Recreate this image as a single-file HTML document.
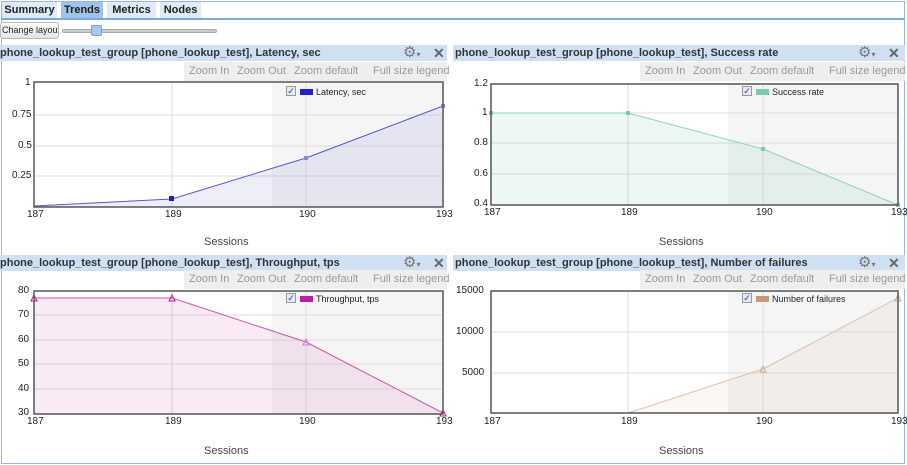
<!DOCTYPE html>
<html><head><meta charset="utf-8"><style>
*{margin:0;padding:0;box-sizing:border-box}
body{width:907px;height:465px;background:#fff;font-family:"Liberation Sans",sans-serif;position:relative;overflow:hidden}
.a{position:absolute}
.tab{position:absolute;top:2px;height:16px;background:#dfeaf7;font-weight:bold;font-size:11px;line-height:16px;text-align:center;color:#222}
.hdr{position:absolute;height:16px;background:#cfe0f3;font-weight:bold;font-size:11px;line-height:16px;color:#333;white-space:nowrap;overflow:hidden}
.tb{position:absolute;height:19px;background:#eeeeee;font-size:11px;line-height:19px;color:#999;white-space:nowrap}
.tb span{position:absolute}
.gear{position:absolute;font-size:15px;color:#777;line-height:16px}
.x{position:absolute;font-size:14px;color:#666;line-height:16px;font-weight:bold}
.lab{position:absolute;font-size:10px;color:#222;line-height:10px}
.ses{position:absolute;font-size:11px;color:#444}
.leg{position:absolute;font-size:9px;color:#222;line-height:12px;white-space:nowrap}
.cb{display:inline-block;width:10px;height:10px;border:1px solid #999;background:#e4e8f0;font-size:9px;line-height:9px;text-align:center;color:#2244aa;vertical-align:top;margin-right:4px}
.sw{display:inline-block;width:13px;height:6px;vertical-align:top;margin-top:3px;margin-right:3px}
</style></head><body>
<div class="a" style="left:1px;top:1px;width:904px;height:463px;border:1px solid #9ab6dc"></div>
<div class="a" style="left:1px;top:18px;width:904px;height:2px;background:#7fa6d9"></div>
<div class="tab" style="left:2px;width:55px">Summary</div>
<div class="tab" style="left:61px;width:42px;background:#9fc3ea">Trends</div>
<div class="tab" style="left:107px;width:49px">Metrics</div>
<div class="tab" style="left:160px;width:41px">Nodes</div>
<div class="a" style="left:0;top:22px;width:59px;height:17px;border:1px solid #bbb;border-radius:3px;background:linear-gradient(#fafafa,#e4e4e4);font-size:9px;line-height:15px;color:#222;padding-left:1px;white-space:nowrap;overflow:hidden">Change layout</div>
<div class="a" style="left:62px;top:29px;width:155px;height:4px;background:#ccc;border:1px solid #aaa;border-radius:2px"></div>
<div class="a" style="left:91px;top:25px;width:11px;height:11px;background:#a8c8f0;border:1px solid #7aa0d0;border-radius:2px"></div>

<div class="hdr" style="left:0;top:45px;width:447px">phone_lookup_test_group [phone_lookup_test], Latency, sec</div>
<div class="hdr" style="left:453px;top:45px;width:452px;padding-left:2px">phone_lookup_test_group [phone_lookup_test], Success rate</div>
<div class="hdr" style="left:0;top:255px;width:447px">phone_lookup_test_group [phone_lookup_test], Throughput, tps</div>
<div class="hdr" style="left:453px;top:255px;width:452px;padding-left:2px">phone_lookup_test_group [phone_lookup_test], Number of failures</div>
<div class="gear" style="left:403px;top:45px">⚙<span style="font-size:8px">▾</span></div><div class="x" style="left:433px;top:45px">✕</div>
<div class="gear" style="left:858px;top:45px">⚙<span style="font-size:8px">▾</span></div><div class="x" style="left:888px;top:45px">✕</div>
<div class="gear" style="left:403px;top:255px">⚙<span style="font-size:8px">▾</span></div><div class="x" style="left:433px;top:255px">✕</div>
<div class="gear" style="left:858px;top:255px">⚙<span style="font-size:8px">▾</span></div><div class="x" style="left:888px;top:255px">✕</div>

<div class="tb" style="left:184px;top:62px;width:263px"><span style="left:5px">Zoom In</span><span style="left:53px">Zoom Out</span><span style="left:110px">Zoom default</span><span style="left:189px">Full size legend</span></div>
<div class="tb" style="left:640px;top:62px;width:265px"><span style="left:5px">Zoom In</span><span style="left:53px">Zoom Out</span><span style="left:110px">Zoom default</span><span style="left:189px">Full size legend</span></div>
<div class="tb" style="left:184px;top:270px;width:263px"><span style="left:5px">Zoom In</span><span style="left:53px">Zoom Out</span><span style="left:110px">Zoom default</span><span style="left:189px">Full size legend</span></div>
<div class="tb" style="left:640px;top:270px;width:265px"><span style="left:5px">Zoom In</span><span style="left:53px">Zoom Out</span><span style="left:110px">Zoom default</span><span style="left:189px">Full size legend</span></div>

<svg class="a" style="left:0;top:0" width="907" height="465">
<rect x="272" y="82" width="171" height="125" fill="#f5f5f5"/>
<rect x="728" y="84" width="170" height="121" fill="#f5f5f5"/>
<rect x="272" y="291" width="171" height="123" fill="#f5f5f5"/>
<rect x="728" y="291" width="170" height="122" fill="#f5f5f5"/>
<g stroke="#ddd" stroke-width="1">
<line x1="172" y1="82" x2="172" y2="207"/><line x1="306" y1="82" x2="306" y2="207"/>
<line x1="34" y1="115" x2="443" y2="115"/><line x1="34" y1="146" x2="443" y2="146"/><line x1="34" y1="176" x2="443" y2="176"/>
<line x1="628" y1="84" x2="628" y2="205"/><line x1="763" y1="84" x2="763" y2="205"/>
<line x1="491" y1="113" x2="898" y2="113"/><line x1="491" y1="143" x2="898" y2="143"/><line x1="491" y1="174" x2="898" y2="174"/>
<line x1="172" y1="291" x2="172" y2="414"/><line x1="306" y1="291" x2="306" y2="414"/>
<line x1="34" y1="315" x2="443" y2="315"/><line x1="34" y1="340" x2="443" y2="340"/><line x1="34" y1="364" x2="443" y2="364"/><line x1="34" y1="389" x2="443" y2="389"/>
<line x1="628" y1="291" x2="628" y2="413"/><line x1="763" y1="291" x2="763" y2="413"/>
<line x1="491" y1="332" x2="898" y2="332"/><line x1="491" y1="373" x2="898" y2="373"/>
</g>
<polygon points="34,206 172,199 306,158 443,106 443,207 34,207" fill="rgba(90,90,210,0.10)"/>
<polyline points="34,206 172,199 306,158 443,106" fill="none" stroke="#5555cc" stroke-width="1"/>
<g fill="#2222bb"><rect x="169" y="196" width="5" height="5"/><rect x="304" y="156" width="4" height="4" fill="#8888dd"/><rect x="441" y="104" width="4" height="4" fill="#8888dd"/></g>
<polygon points="491,113 628,113 763,149 898,205 491,205" fill="rgba(110,200,170,0.12)"/>
<polyline points="491,113 628,113 763,149 898,205" fill="none" stroke="#90d0bd" stroke-width="1"/>
<g fill="#7cc8b0"><rect x="489" y="111" width="4" height="4"/><rect x="626" y="111" width="4" height="4"/><rect x="761" y="147" width="4" height="4"/><rect x="896" y="203" width="4" height="4"/></g>
<polygon points="34,298 172,298 306,342 443,413 443,414 34,414" fill="rgba(210,90,180,0.13)"/>
<polyline points="34,298 172,298 306,342 443,413" fill="none" stroke="#cc55aa" stroke-width="1"/>
<g fill="none" stroke="#b0209a"><path d="M31,301 L34,295 L37,301Z"/><path d="M169,301 L172,295 L175,301Z"/><path d="M303,345 L306,339 L309,345Z" stroke="#dd77cc"/><path d="M440,416 L443,410 L446,416Z"/></g>
<polygon points="628,413 763,369 898,298 898,413" fill="rgba(200,150,110,0.08)"/>
<polyline points="628,413 763,369 898,298" fill="none" stroke="#dcc0aa" stroke-width="1"/>
<g fill="none" stroke="#d0a888"><path d="M760,372 L763,366 L766,372Z"/><path d="M895,301 L898,295 L901,301Z"/></g>
<g fill="none" stroke="#555" stroke-width="1.5">
<rect x="34" y="82" width="409" height="125"/>
<rect x="491" y="84" width="407" height="121"/>
<rect x="34" y="291" width="409" height="123"/>
<rect x="491" y="291" width="407" height="122"/>
</g>
</svg>

<div class="lab" style="left:25px;top:78px">1</div><div class="lab" style="left:12px;top:110px">0.75</div><div class="lab" style="left:18px;top:141px">0.5</div><div class="lab" style="left:12px;top:171px">0.25</div>
<div class="lab" style="left:27px;top:210px">187</div><div class="lab" style="left:165px;top:210px">189</div><div class="lab" style="left:299px;top:210px">190</div><div class="lab" style="left:436px;top:210px">193</div>
<div class="ses" style="left:204px;top:236px">Sessions</div>

<div class="lab" style="left:474px;top:79px">1.2</div><div class="lab" style="left:482px;top:108px">1</div><div class="lab" style="left:474px;top:138px">0.8</div><div class="lab" style="left:474px;top:169px">0.6</div><div class="lab" style="left:474px;top:199px">0.4</div>
<div class="lab" style="left:484px;top:208px">187</div><div class="lab" style="left:621px;top:208px">189</div><div class="lab" style="left:756px;top:208px">190</div><div class="lab" style="left:891px;top:208px">193</div>
<div class="ses" style="left:659px;top:236px">Sessions</div>

<div class="lab" style="left:18px;top:286px">80</div><div class="lab" style="left:18px;top:310px">70</div><div class="lab" style="left:18px;top:335px">60</div><div class="lab" style="left:18px;top:359px">50</div><div class="lab" style="left:18px;top:384px">40</div><div class="lab" style="left:18px;top:408px">30</div>
<div class="lab" style="left:27px;top:417px">187</div><div class="lab" style="left:165px;top:417px">189</div><div class="lab" style="left:299px;top:417px">190</div><div class="lab" style="left:436px;top:417px">193</div>
<div class="ses" style="left:204px;top:445px">Sessions</div>

<div class="lab" style="left:456px;top:286px">15000</div><div class="lab" style="left:456px;top:327px">10000</div><div class="lab" style="left:462px;top:368px">5000</div>
<div class="lab" style="left:484px;top:417px">187</div><div class="lab" style="left:621px;top:417px">189</div><div class="lab" style="left:756px;top:417px">190</div><div class="lab" style="left:891px;top:417px">193</div>
<div class="ses" style="left:659px;top:445px">Sessions</div>

<div class="leg" style="left:286px;top:86px"><span class="cb">✓</span><span class="sw" style="background:#2222cc"></span>Latency, sec</div>
<div class="leg" style="left:742px;top:86px"><span class="cb">✓</span><span class="sw" style="background:#7cc8b0"></span>Success rate</div>
<div class="leg" style="left:286px;top:293px"><span class="cb">✓</span><span class="sw" style="background:#c020a0"></span>Throughput, tps</div>
<div class="leg" style="left:742px;top:293px"><span class="cb">✓</span><span class="sw" style="background:#c8987a"></span>Number of failures</div>
</body></html>
